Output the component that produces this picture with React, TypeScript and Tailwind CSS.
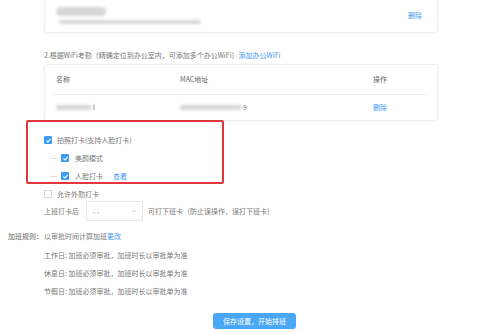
import React from "react";

const blue = "text-[#4596f0]";

function Check({ on }: { on: boolean }) {
  return on ? (
    <span className="w-[8px] h-[8px] rounded-[1px] bg-[#3d9cf3] flex items-center justify-center shrink-0">
      <svg viewBox="0 0 10 10" className="w-[7px] h-[7px]">
        <polyline points="2,5.2 4.2,7.2 8,2.8" fill="none" stroke="#fff" strokeWidth="1.6" />
      </svg>
    </span>
  ) : (
    <span className="w-[8px] h-[8px] rounded-[1px] bg-white border border-[#d8d8d8] shrink-0" />
  );
}

function Blur({ w, h = 5 }: { w: number; h?: number }) {
  return (
    <span
      className="inline-block rounded-full bg-[#d6d6d6] blur-[1.5px]"
      style={{ width: w, height: h }}
    />
  );
}

export default function App() {
  return (
    <div className="relative w-[500px] h-[333px] overflow-hidden bg-white text-[7px] leading-none text-[#777] whitespace-nowrap font-['Noto_Sans_CJK_SC','Noto_Sans',sans-serif]">
      <div className="pl-[44px] pr-[62px]">
        {/* 已添加的办公地点 */}
        <div className="-mt-[10px] h-[43px] border border-[#eee] rounded-[3px] shadow-[0_1px_3px_rgba(0,0,0,0.04)] flex items-start justify-between pt-[16px] pl-[11px] pr-[15px]">
          <div className="flex flex-col gap-[2px]">
            <Blur w={50} h={9} />
            <span className="ml-[3px]">
              <Blur w={142} h={4} />
            </span>
          </div>
          <span className={`mt-[5px] ${blue}`}>删除</span>
        </div>

        <div className="mt-[16px] h-[12px] flex items-center">
          2.根据WiFi考勤（精确定位到办公室内，可添加多个办公WiFi）<span className={blue}>添加办公WiFi</span>
        </div>

        {/* WiFi 表格 */}
        <div className="mt-[3px] border border-[#eee] rounded-[3px] shadow-[0_1px_3px_rgba(0,0,0,0.04)]">
          <div className="mx-[8px] h-[30px] flex items-center border-b border-[#eee] text-[#666]">
            <span className="w-[127px] pl-[3px]">名称</span>
            <span className="w-[193px]">MAC地址</span>
            <span>操作</span>
          </div>
          <div className="mx-[8px] h-[25px] flex items-center">
            <span className="w-[127px] pl-[3px] flex items-center">
              <Blur w={36} />
              <span className="ml-[1px]">l</span>
            </span>
            <span className="w-[193px] flex items-center">
              <Blur w={62} />
              <span className="ml-[1px]">9</span>
            </span>
            <span className={blue}>删除</span>
          </div>
        </div>

        {/* 打卡方式 */}
        <div className="mt-[10px] h-[18px] flex items-center gap-[5px]">
          <Check on />
          <span>拍照打卡(支持人脸打卡)</span>
        </div>
        <div className="h-[18px] flex items-center">
          <span className="ml-[6px] w-[7px] h-px bg-[#ddd]" />
          <span className="ml-[4px] mr-[6px]">
            <Check on />
          </span>
          <span>美颜模式</span>
        </div>
        <div className="h-[18px] flex items-center">
          <span className="ml-[6px] w-[7px] h-px bg-[#ddd]" />
          <span className="ml-[4px] mr-[6px]">
            <Check on />
          </span>
          <span>人脸打卡</span>
          <span className={`ml-[10px] ${blue}`}>查看</span>
        </div>
        <div className="mt-[2px] h-[14px] flex items-center gap-[5px]">
          <Check on={false} />
          <span>允许外勤打卡</span>
        </div>
        <div className="h-[20px] flex items-center">
          <span className="w-[42px]">上班打卡后</span>
          <div className="w-[57px] h-[20px] border border-[#e6e6e6] rounded-[2px] flex items-center justify-between pl-[6px] pr-[5px] text-[#888]">
            <span>- -</span>
            <svg viewBox="0 0 10 10" className="w-[6px] h-[6px]">
              <polyline points="2,3.5 5,6.5 8,3.5" fill="none" stroke="#aaa" strokeWidth="1" />
            </svg>
          </div>
          <span className="ml-[5px]">可打下班卡（防止误操作，误打下班卡）</span>
        </div>
      </div>

      {/* 加班规则 */}
      <div className="mt-[8px] pl-[8px] h-[14px] flex items-center">
        <span className="w-[36px] shrink-0 text-[#666]">加班规则：</span>
        <span>以审批时间计算加班</span>
        <span className={blue}>更改</span>
      </div>
      <div className="mt-[3px] pl-[44px]">
        <div className="h-[18px] flex items-center">工作日: 加班必须审批，加班时长以审批单为准</div>
        <div className="h-[18px] flex items-center">休息日: 加班必须审批，加班时长以审批单为准</div>
        <div className="h-[18px] flex items-center">节假日: 加班必须审批，加班时长以审批单为准</div>
      </div>

      <div className="mt-[13px] ml-[213px] w-[83px] h-[16px] rounded-[3px] bg-[#4aa7f5] text-white flex items-center justify-center">
        保存设置，开始排班
      </div>

      {/* 标注框 */}
      <div className="absolute left-[26px] top-[120px] w-[198px] h-[64px] border-2 border-[#e2363c] rounded-[2px]" />
    </div>
  );
}
